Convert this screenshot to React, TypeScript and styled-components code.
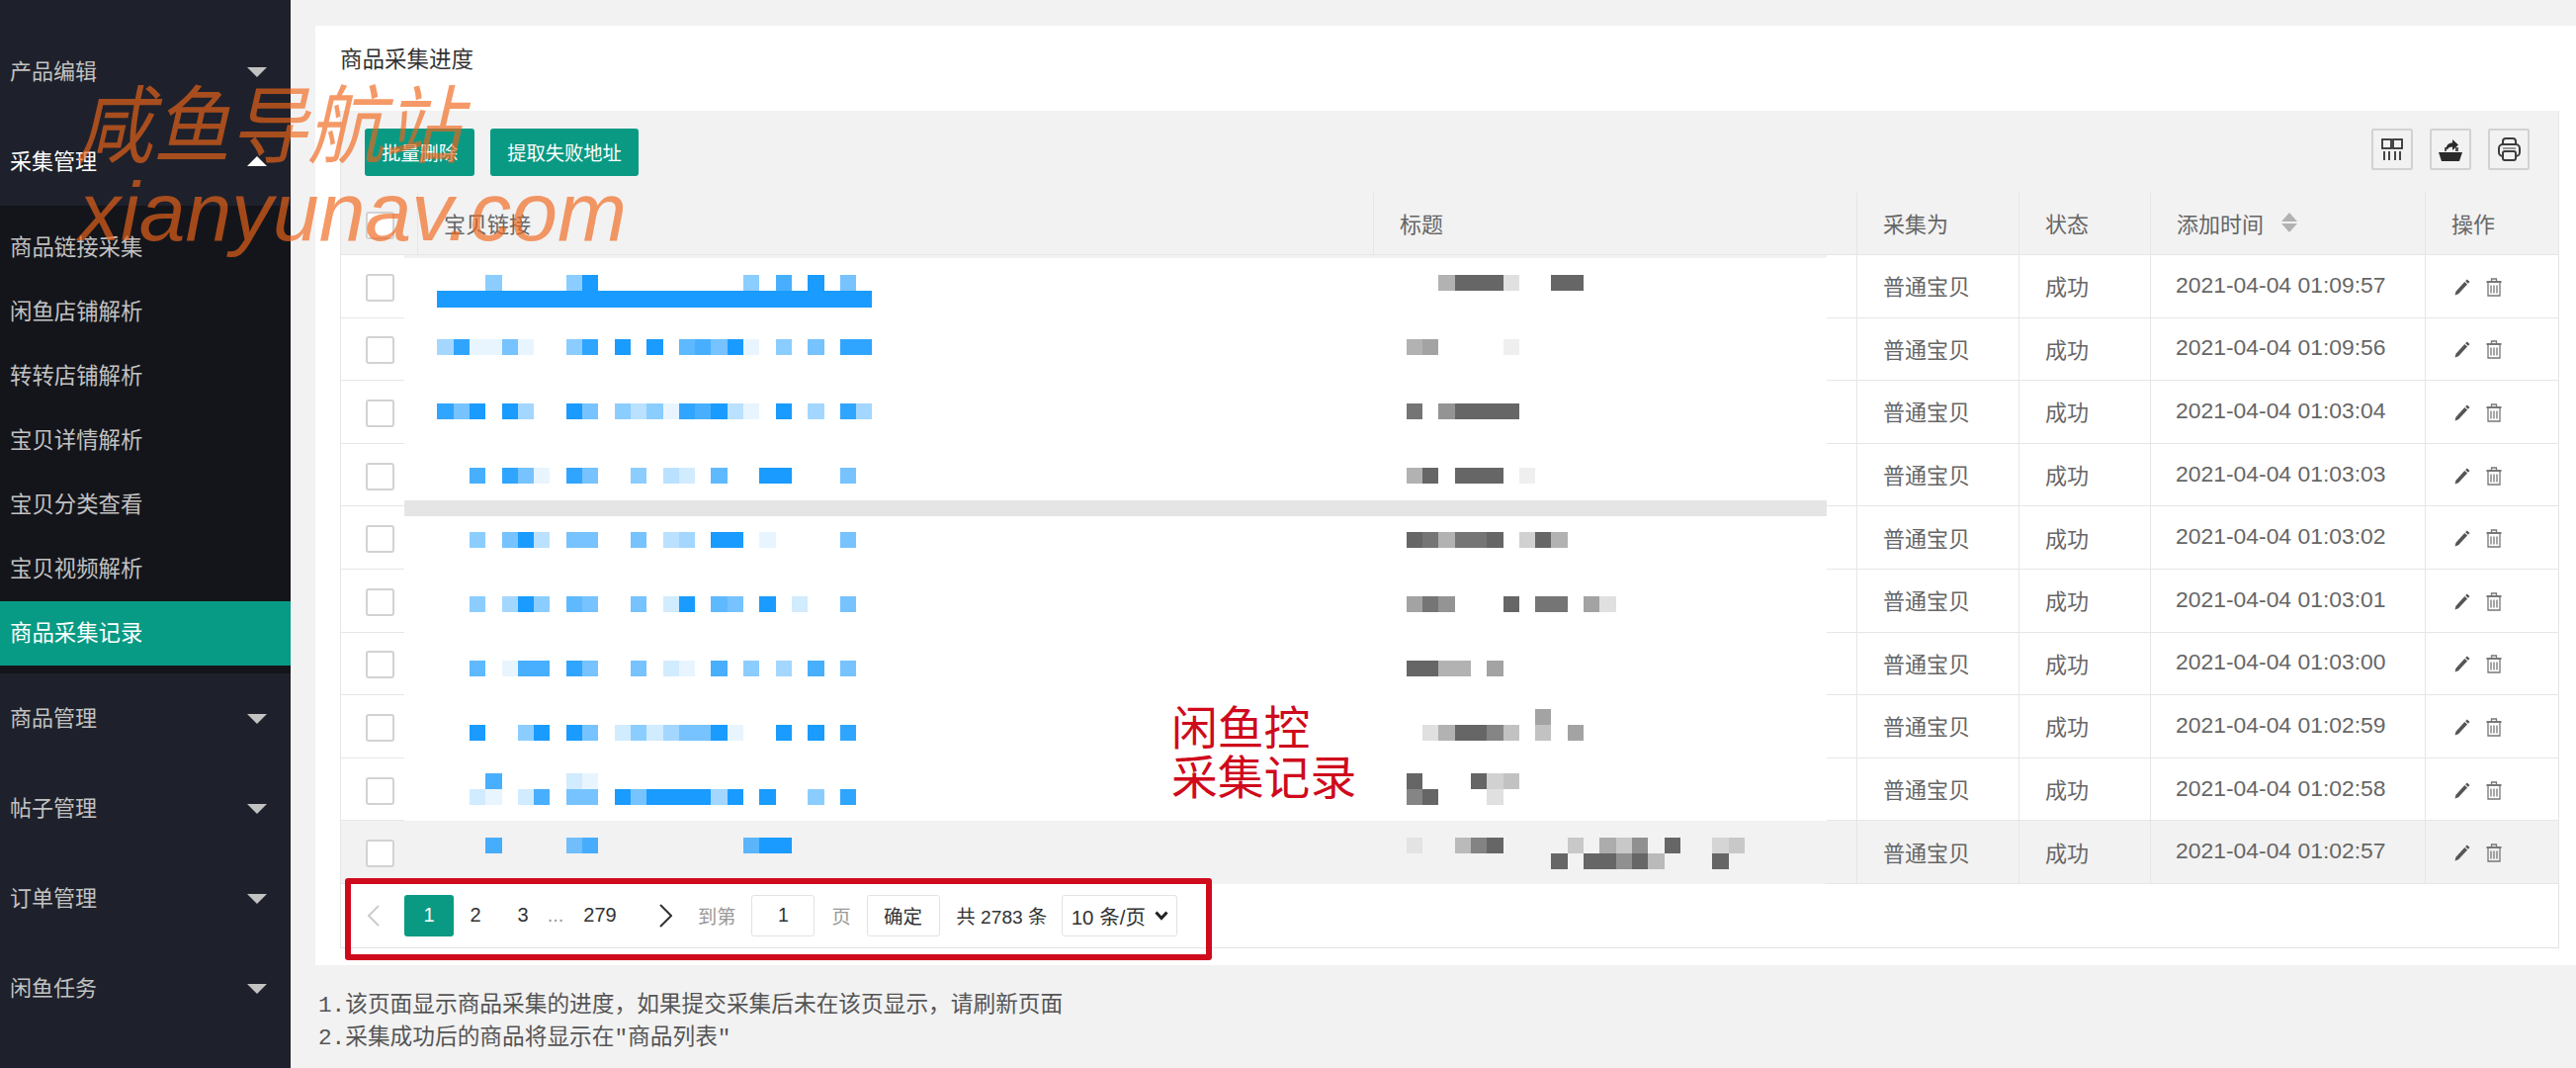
import React from 'react';
import styled, { createGlobalStyle } from 'styled-components';

const GlobalStyle = createGlobalStyle`
	html, body {
		margin: 0;
		padding: 0;
		background: #f2f2f2;
	}
	body {
		font-family: 'Liberation Sans', 'Noto Sans CJK SC', sans-serif;
		color: #666;
	}
	* {
		box-sizing: border-box;
	}
`;

type MenuGroup = {
	label: string;
	open?: boolean;
	children?: { label: string; active?: boolean }[];
};

const menu: MenuGroup[] = [
	{ label: '产品编辑' },
	{
		label: '采集管理',
		open: true,
		children: [
			{ label: '商品链接采集' },
			{ label: '闲鱼店铺解析' },
			{ label: '转转店铺解析' },
			{ label: '宝贝详情解析' },
			{ label: '宝贝分类查看' },
			{ label: '宝贝视频解析' },
			{ label: '商品采集记录', active: true },
		],
	},
	{ label: '商品管理' },
	{ label: '帖子管理' },
	{ label: '订单管理' },
	{ label: '闲鱼任务' },
];

const times = [
	'2021-04-04 01:09:57',
	'2021-04-04 01:09:56',
	'2021-04-04 01:03:04',
	'2021-04-04 01:03:03',
	'2021-04-04 01:03:02',
	'2021-04-04 01:03:01',
	'2021-04-04 01:03:00',
	'2021-04-04 01:02:59',
	'2021-04-04 01:02:58',
	'2021-04-04 01:02:57',
];

// mosaic cells that hide the links and titles: grid row -> one char per cell, a = full colour
const blueCells: [number, string][] = [
	[0, '...5....5a.........5.8.a.6.'],
	[1, 'aaaaaaaaaaaaaaaaaaaaaaaaaaa'],
	[4, '491161..59.a.a.786a1.5.6.99'],
	[8, '96a.a4..a6.535198a31.a.4.94'],
	[12, '..8.961.96..5.32.7..aa...6.'],
	[16, '..5.6a3.66..6.34.aa.1....6.'],
	[20, '..5.4a5.76..6.2a.76.a.2..6.'],
	[24, '..7.188.96..6.21.8.5.4.8.6.'],
	[28, '..a..5a.a6.252466a1..a.a.9.'],
	[31, '...8....21.................'],
	[32, '..21.28.66.a6aaaa4a.a..5.9.'],
	[35, '...8....68.........7aa.....'],
];

const greyCells: [number, string][] = [
	[0, '..5aaa2..aa'],
	[4, '56....1'],
	[8, '9.7aaaa'],
	[12, '5a.aaa.1'],
	[16, 'a9599a.3a5'],
	[20, '697...a.99.62'],
	[24, 'aa55.6'],
	[27, '........6'],
	[28, '.25aa84.4.6'],
	[31, 'a...a34'],
	[32, '8a...2'],
	[35, '1..48a....3.537.a..23'],
	[36, '.........a.aa7a4...a'],
];

const Page = styled.div`
	position: relative;
	display: flex;
	width: 2606px;
	height: 1080px;
	overflow: hidden;
`;

const Sidebar = styled.nav`
	width: 294px;
	flex-shrink: 0;
	padding-top: 27px;
	background: #1e212b;
`;

const GroupRow = styled.div<{ $open?: boolean }>`
	display: flex;
	align-items: center;
	justify-content: space-between;
	height: ${(p) => (p.$open ? '90px' : '91px')};
	padding: 0 24px 0 10px;
	font-size: 22px;
	color: ${(p) => (p.$open ? '#fff' : '#c2c2c2')};
`;

const GroupLabel = styled.span`
	margin-bottom: 5px;
`;

const Arrow = styled.span<{ $open?: boolean }>`
	width: 0;
	height: 0;
	border-left: 10px solid transparent;
	border-right: 10px solid transparent;
	border-top: ${(p) => (p.$open ? '0' : '10px solid #c2c2c2')};
	border-bottom: ${(p) => (p.$open ? '10px solid #fff' : '0')};
`;

const SubList = styled.div`
	padding: 10px 0 8px;
	background: #14151b;
`;

const SubItem = styled.div<{ $active?: boolean }>`
	display: flex;
	align-items: center;
	height: 65px;
	padding: 0 0 5px 10px;
	font-size: 22.4px;
	color: ${(p) => (p.$active ? '#fff' : '#c2c2c2')};
	background: ${(p) => (p.$active ? '#079a84' : 'transparent')};
`;

const Main = styled.main`
	flex: 1;
	padding: 26px 0 0 25px;
	background: #f2f2f2;
`;

const Card = styled.section`
	height: 950px;
	background: #fff;
`;

const CardTitle = styled.h2`
	display: flex;
	align-items: center;
	height: 86px;
	margin: 0;
	padding: 0 0 23px 25px;
	font-size: 22.5px;
	font-weight: 400;
	color: #333;
`;

const TableWrap = styled.div`
	width: 2245px;
	margin-left: 25px;
	border-right: 1px solid #e6e6e6;
	border-left: 1px solid #e6e6e6;
	border-bottom: 1px solid #e2e2e2;
`;

const Toolbar = styled.div`
	display: flex;
	align-items: flex-start;
	justify-content: space-between;
	height: 83px;
	padding: 18px 29px 0 24px;
	background: #f2f2f2;
`;

const ToolGroup = styled.div<{ $gap: number }>`
	display: flex;
	gap: ${(p) => p.$gap}px;
`;

const GreenButton = styled.button`
	height: 48px;
	padding: 0 17px;
	border: 0;
	border-radius: 3px;
	font: inherit;
	font-size: 19.3px;
	color: #fff;
	background: #0a9a84;
`;

const ToolIcon = styled.div`
	display: flex;
	align-items: center;
	justify-content: center;
	width: 42px;
	height: 42px;
	border: 2px solid #d2d2d2;
	border-radius: 2px;
`;

const Body = styled.div`
	position: relative;
`;

const Row = styled.div<{ $height: number; $hover?: boolean }>`
	display: grid;
	grid-template-columns: 78px 967px 489px 164px 133px 278px 134px;
	height: ${(p) => p.$height}px;
	background: ${(p) => (p.$hover ? '#f2f2f2' : 'transparent')};
`;

const Cell = styled.div<{ $head?: boolean }>`
	display: flex;
	align-items: center;
	padding: 0 0 2px 26px;
	border-right: 1px solid #e6e6e6;
	border-bottom: 1px solid #e6e6e6;
	font-size: 22px;
	color: #666;
	background: ${(p) => (p.$head ? '#f2f2f2' : 'transparent')};

	&:last-child {
		border-right: 0;
	}
`;

const CheckCell = styled(Cell)`
	padding: 3px 0 0 25px;
`;

const Checkbox = styled.span`
	width: 29px;
	height: 28px;
	border: 2px solid #d2d2d2;
	border-radius: 3px;
	background: #fff;
`;

const SortArrows = styled.span`
	display: flex;
	flex-direction: column;
	gap: 2px;
	margin-left: 18px;

	&::before,
	&::after {
		content: '';
		width: 0;
		height: 0;
		border-left: 8px solid transparent;
		border-right: 8px solid transparent;
	}
	&::before {
		border-bottom: 9px solid #b2b2b2;
	}
	&::after {
		border-top: 9px solid #b2b2b2;
	}
`;

const TimeText = styled.span`
	margin-left: -1px;
	font-size: 22.9px;
`;

const Actions = styled.div`
	display: flex;
	align-items: center;
	gap: 16px;
	margin-top: 4px;
	padding-left: 3px;
`;

const MaskLayer = styled.svg`
	position: absolute;
	top: 0;
	left: 64px;
	display: block;
`;

const Pager = styled.div`
	display: flex;
	align-items: center;
	height: 64px;
	padding-left: 27px;
	font-size: 20px;
	color: #333;
`;

const PagerArrow = styled.svg<{ $gap: number }>`
	flex-shrink: 0;
	margin-right: ${(p) => p.$gap}px;
`;

const PageNum = styled.span<{ $width: number; $active?: boolean; $muted?: boolean; $shift?: number }>`
	display: flex;
	align-items: center;
	justify-content: center;
	width: ${(p) => p.$width}px;
	height: 42px;
	margin-left: ${(p) => p.$shift || 0}px;
	border-radius: 3px;
	color: ${(p) => (p.$active ? '#fff' : p.$muted ? '#999' : '#333')};
	background: ${(p) => (p.$active ? '#0a9a84' : 'transparent')};
`;

const PagerText = styled.span<{ $muted?: boolean; $left: number }>`
	margin-left: ${(p) => p.$left}px;
	font-size: 19.2px;
	color: ${(p) => (p.$muted ? '#999' : '#333')};
	white-space: nowrap;
`;

const PagerBox = styled.span<{ $width: number; $left: number; $size?: number }>`
	display: flex;
	align-items: center;
	justify-content: center;
	gap: 9px;
	width: ${(p) => p.$width}px;
	height: 42px;
	margin-left: ${(p) => p.$left}px;
	border: 1px solid #e2e2e2;
	border-radius: 3px;
	font-size: ${(p) => p.$size || 19.5}px;
	color: #333;
	background: #fff;
	white-space: nowrap;
`;

const Notes = styled.div`
	margin-top: 25px;
	padding-left: 3px;
	font-family: 'Liberation Mono', 'Noto Sans CJK SC', monospace;
	font-size: 22.7px;
	line-height: 33px;
	color: #555;
	white-space: nowrap;
`;

const RedFrame = styled.div`
	position: absolute;
	top: 888px;
	left: 349px;
	width: 877px;
	height: 83px;
	border: 6px solid #cf0a1c;
	border-radius: 3px;
`;

const RedNote = styled.div`
	position: absolute;
	top: 712px;
	left: 1185px;
	font-size: 46.8px;
	line-height: 50px;
	color: #cf0a1c;
`;

const Watermark = styled.div`
	position: absolute;
	top: 73px;
	left: 77px;
	font-style: italic;
	color: rgba(240, 100, 25, 0.66);
	pointer-events: none;
	white-space: nowrap;
`;

const WatermarkCn = styled.div`
	font-family: 'Noto Sans CJK SC', sans-serif;
	font-size: 78px;
	line-height: 97px;
	transform-origin: left center;
	transform: scaleY(1.1);
`;

const WatermarkEn = styled.div`
	margin-left: 3px;
	font-size: 84px;
	line-height: 88px;
`;

const level = (c: string) => (c === 'a' ? 1 : Number(c) / 10);

const MosaicCells = ({ data, x, color }: { data: [number, string][]; x: number; color: string }) => (
	<>
		{data.map(([row, cells]) =>
			cells.split('').map((c, i) =>
				c === '.' ? null : (
					<rect
						key={`${row}-${i}`}
						x={x + i * 16.3}
						y={20 + row * 16.25}
						width={16.3}
						height={16.25}
						fill={color}
						fillOpacity={level(c)}
					/>
				),
			),
		)}
	</>
);

const Mask = () => (
	<MaskLayer width={1439} height={636} viewBox="0 0 1439 636" shapeRendering="crispEdges">
		<rect width={1439} height={3} fill="#f2f2f2" />
		<rect y={3} width={1439} height={569} fill="#fff" />
		<rect y={248} width={1439} height={16} fill="#e5e5e5" />
		<rect y={572} width={1439} height={64} fill="#f2f2f2" />
		<MosaicCells data={blueCells} x={33.3} color="#1a9bff" />
		<MosaicCells data={greyCells} x={1013.7} color="#666666" />
	</MaskLayer>
);

const ColsIcon = () => (
	<svg width="22" height="22" viewBox="0 0 22 22" fill="none" stroke="#333" strokeWidth="1.8">
		<rect x="1" y="1" width="9" height="9" />
		<rect x="12" y="1" width="9" height="9" />
		<path d="M3 13v9M8 13v9M14 13v9M19 13v9" />
	</svg>
);

const ExportIcon = () => (
	<svg width="24" height="23" viewBox="0 0 24 23" fill="#2b2b2b">
		<path d="M0 14h24l-3 9H3z" />
		<path d="M6 13V9h2v4zM17 13V9h3v4zM8 9h2v1.500H8z" fillOpacity=".8" />
		<path d="M7.500 12c0-5.500 2.500-7.500 6.500-7.500V1l6 5.500-6 5.500V8.500c-2.500 0-4.500 1-6.500 3.500z" />
	</svg>
);

const PrintIcon = () => (
	<svg width="23" height="24" viewBox="0 0 23 24" fill="none" stroke="#3c3c3c" strokeWidth="2">
		<path d="M5 8V4a3 3 0 0 1 3-3h7a3 3 0 0 1 3 3v4" />
		<rect x="1" y="7" width="21" height="12" rx="4" />
		<rect x="5" y="14" width="13" height="9" rx="2" fill="#f2f2f2" />
		<path d="M5 11h13" stroke="#999" />
	</svg>
);

const PencilIcon = () => (
	<svg width="16" height="17" viewBox="0 0 16 17" fill="#555">
		<path d="M12.800.5 15.500 3l-1.600 1.800-2.800-2.600zM10.300 3l2.800 2.600L4 15.300.5 16.500l1-3.800z" />
	</svg>
);

const TrashIcon = () => (
	<svg width="16" height="19" viewBox="0 0 16 19" fill="none" stroke="#777">
		<path d="M.5 4h15" strokeWidth="2" />
		<path d="M5.500 3.500V1h5v2.500M2 5v13h12V5" strokeWidth="1.300" />
		<path d="M5 7.500v8M8 7.500v8M11 7.500v8" strokeWidth="1.300" />
	</svg>
);

export default function App() {
	return (
		<>
			<GlobalStyle />
			<Page>
				<Sidebar>
					{menu.map((group) => (
						<div key={group.label}>
							<GroupRow $open={group.open}>
								<GroupLabel>{group.label}</GroupLabel>
								<Arrow $open={group.open} />
							</GroupRow>
							{group.children && (
								<SubList>
									{group.children.map((item) => (
										<SubItem key={item.label} $active={item.active}>
											{item.label}
										</SubItem>
									))}
								</SubList>
							)}
						</div>
					))}
				</Sidebar>
				<Main>
					<Card>
						<CardTitle>商品采集进度</CardTitle>
						<TableWrap>
							<Toolbar>
								<ToolGroup $gap={16}>
									<GreenButton>批量删除</GreenButton>
									<GreenButton>提取失败地址</GreenButton>
								</ToolGroup>
								<ToolGroup $gap={17}>
									<ToolIcon>
										<ColsIcon />
									</ToolIcon>
									<ToolIcon>
										<ExportIcon />
									</ToolIcon>
									<ToolIcon>
										<PrintIcon />
									</ToolIcon>
								</ToolGroup>
							</Toolbar>
							<Row $height={63}>
								<CheckCell $head>
									<Checkbox />
								</CheckCell>
								<Cell $head>宝贝链接</Cell>
								<Cell $head>标题</Cell>
								<Cell $head>采集为</Cell>
								<Cell $head>状态</Cell>
								<Cell $head>
									添加时间
									<SortArrows />
								</Cell>
								<Cell $head>操作</Cell>
							</Row>
							<Body>
								{times.map((time, i) => (
									<Row key={time} $height={63.6} $hover={i === times.length - 1}>
										<CheckCell>
											<Checkbox />
										</CheckCell>
										<Cell />
										<Cell />
										<Cell>普通宝贝</Cell>
										<Cell>成功</Cell>
										<Cell>
											<TimeText>{time}</TimeText>
										</Cell>
										<Cell>
											<Actions>
												<PencilIcon />
												<TrashIcon />
											</Actions>
										</Cell>
									</Row>
								))}
								<Mask />
							</Body>
							<Pager>
								<PagerArrow $gap={25} width="12" height="22" viewBox="0 0 12 22" fill="none" stroke="#ccc" strokeWidth="2">
									<path d="M11 1 1 11l10 10" />
								</PagerArrow>
								<PageNum $width={50} $active>
									1
								</PageNum>
								<PageNum $width={44}>2</PageNum>
								<PageNum $width={42} $shift={5}>
									3
								</PageNum>
								<PageNum $width={24} $muted>
									...
								</PageNum>
								<PageNum $width={66}>279</PageNum>
								<PageNum $width={66}>
									<svg width="13" height="24" viewBox="0 0 13 24" fill="none" stroke="#333" strokeWidth="2">
										<path d="m1 1 11 11L1 23" />
									</svg>
								</PageNum>
								<PagerText $muted $left={0}>
									到第
								</PagerText>
								<PagerBox $width={64} $left={16}>
									1
								</PagerBox>
								<PagerText $muted $left={17}>
									页
								</PagerText>
								<PagerBox $width={74} $left={16}>
									确定
								</PagerBox>
								<PagerText $left={17}>共 2783 条</PagerText>
								<PagerBox $width={117} $left={15} $size={20.5}>
									10 条/页
									<svg width="14" height="10" viewBox="0 0 14 10" fill="none" stroke="#222" strokeWidth="3">
										<path d="m1.500 1.500 5.500 6 5.500-6" />
									</svg>
								</PagerBox>
							</Pager>
						</TableWrap>
					</Card>
					<Notes>
						<div>1.该页面显示商品采集的进度，如果提交采集后未在该页显示，请刷新页面</div>
						<div>2.采集成功后的商品将显示在"商品列表"</div>
					</Notes>
				</Main>
				<RedFrame />
				<RedNote>
					闲鱼控
					<br />
					采集记录
				</RedNote>
				<Watermark>
					<WatermarkCn>咸鱼导航站</WatermarkCn>
					<WatermarkEn>xianyunav.com</WatermarkEn>
				</Watermark>
			</Page>
		</>
	);
}
